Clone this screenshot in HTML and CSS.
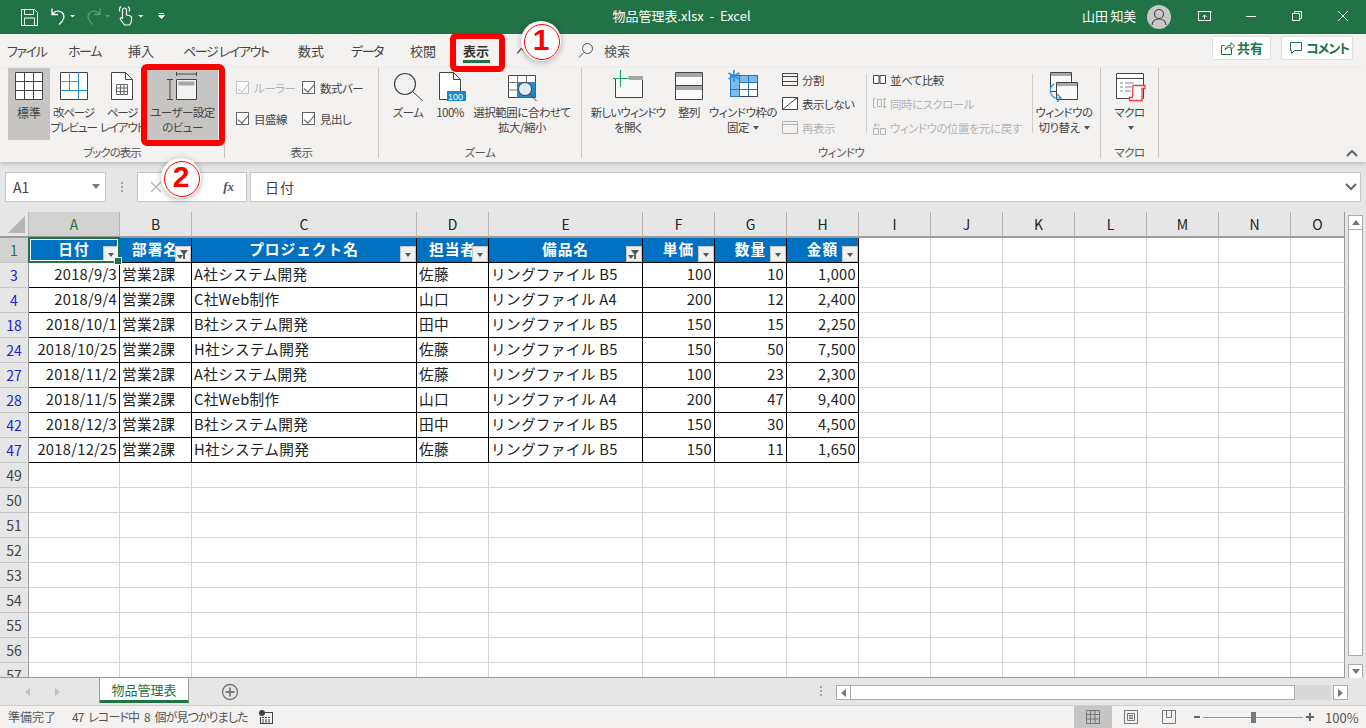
FILE: index.html
```html
<!DOCTYPE html>
<html lang="ja">
<head>
  <meta charset="UTF-8">
  <title>物品管理表.xlsx - Excel</title>
  <link rel="stylesheet" href="styles.css">
</head>
<body>
  <header class="titlebar">
    <div class="qat">
      <svg width="175" height="34" viewBox="0 0 175 34" fill="none" stroke="#fff">
        <path d="M21.500 9.500h13l3 3v13h-16z M24.500 9.500v5h9v-5 M24.500 25.500v-7.500h10v7.500"/>
        <path d="M52 8.500v6h6 M52.500 14c2.500-3 6.500-4 9.500-1.500 3.500 3 2 8-3 12" stroke-width="1.300"/>
        <path d="M70 15h5l-2.500 2.500z" fill="#fff" stroke="none"/>
        <path d="M100 8.500v6h-6 M99.500 14c-2.500-3-6.500-4-9.500-1.500-3.500 3-2 8 3 12" stroke="#5d9a7a" stroke-width="1.300"/>
        <path d="M105 15h5l-2.500 2.500z" fill="#5d9a7a" stroke="none"/>
        <path d="M122.500 16v-6a2 2 0 0 1 4 0v5l3 .5c1.500.3 2 1 2 2.500v2c0 2-1 4-2 5h-5l-4-5.500c-.8-1.200.5-2.500 2-1.500z M120 11.500a4 4 0 0 1 1-5 M129 11.500a4 4 0 0 0-1-5" stroke-width="1.200"/>
        <path d="M138 15h5.500l-2.750 2.500z" fill="#fff" stroke="none"/>
        <path d="M159 13.500h5 M158.500 15.500h6l-3 3z" fill="#fff" stroke-width="1"/>
      </svg>
    </div>
    <div class="doc-title">物品管理表.xlsx&nbsp; - &nbsp;Excel</div>
    <div class="win">
      <span class="user">山田 知美</span>
      <span class="avatar">
        <svg width="24" height="24" viewBox="0 0 24 24" fill="none" stroke="#444" stroke-width="1.200"><circle cx="12" cy="9" r="4.500"/><path d="M5 20c.5-4 3-6 7-6s6.500 2 7 6"/></svg>
      </span>
      <button class="win-btn"><svg width="16" height="16" viewBox="0 0 16 16" fill="none" stroke="#fff"><path d="M1.500 3.500h12v9h-12z M.5 3.500h14 M7.500 11v-4 M5.500 9l2-2 2 2"/></svg></button>
      <button class="win-btn"><svg width="16" height="16" viewBox="0 0 16 16" stroke="#fff"><path d="M3 8.500h10"/></svg></button>
      <button class="win-btn"><svg width="16" height="16" viewBox="0 0 16 16" fill="none" stroke="#fff"><path d="M3.500 5.500h7v7h-7z M5.500 5.500v-2h7v7h-2"/></svg></button>
      <button class="win-btn"><svg width="16" height="16" viewBox="0 0 16 16" fill="none" stroke="#fff"><path d="M3 3l10 10 M13 3L3 13"/></svg></button>
    </div>
  </header>

  <nav class="tabs">
    <span class="tab kana t-file">ファイル</span>
    <span class="tab kana t-home">ホーム</span>
    <span class="tab t-insert">挿入</span>
    <span class="tab kana t-layout">ページ レイアウト</span>
    <span class="tab t-formula">数式</span>
    <span class="tab kana t-data">データ</span>
    <span class="tab t-review">校閲</span>
    <span class="tab tab-active t-view">表示</span>
    <span class="tab kana t-help">ヘルプ</span>
    <span class="search">
      <svg width="16" height="16" viewBox="0 0 16 16" fill="none" stroke="#555"><circle cx="9.500" cy="6.500" r="5"/><path d="M6 10.500l-5 5"/></svg>
      検索
    </span>
    <div class="actions">
      <button class="action a-share">
        <svg width="16" height="16" viewBox="0 0 16 16" fill="none" stroke="#217346"><path d="M12.500 9v5.500h-10v-9h3 M6 10c.5-3 3-5 6-5V2.500l3.500 3.500-3.500 3.500V7c-2.500 0-4.500 1-6 3z"/></svg>
        共有
      </button>
      <button class="action a-comment">
        <svg width="16" height="16" viewBox="0 0 16 16" fill="none" stroke="#217346"><path d="M2.500 2.500h11v8h-7l-3 3v-3h-1z"/></svg>
        コメント
      </button>
    </div>
  </nav>

  <section class="ribbon">
    <div class="group g-book">
      <div class="body">
        <div class="big b-normal on">
          <svg width="32" height="32" viewBox="0 0 32 32" fill="#fff" stroke="#444"><path d="M2.500 2.500h27v27h-27z M11.500 2.500v27 M20.500 2.500v27 M2.500 11.500h27 M2.500 20.500h27"/></svg>
          <span>標準</span>
        </div>
        <div class="big b-break">
          <svg width="32" height="32" viewBox="0 0 32 32" fill="none" stroke="#444"><path d="M2.500 2.500h27v27h-27z" fill="#fff"/><path d="M11.500 2.500v18 M2.500 11.500h18" stroke="#888"/><path d="M20.500 2.500v27 M2.500 20.500h27" stroke="#1e88d0"/></svg>
          <span>改ページ<br>プレビュー</span>
        </div>
        <div class="big b-page">
          <svg width="32" height="32" viewBox="0 0 32 32" fill="none" stroke="#444"><path d="M5.500 2.500h14l7 7v20h-21z M19.500 2.500v7h7" fill="#fff"/><path d="M10.500 14.500h11v10h-11z M10.500 18h11 M10.500 21.500h11 M14.500 14.500v10 M18 14.500v10" stroke="#666"/></svg>
          <span>ページ<br>レイアウト</span>
        </div>
        <div class="big b-custom on">
          <svg width="32" height="32" viewBox="0 0 32 32" fill="none" stroke="#444"><path d="M9.500 2v4 M9.500 4h20 M29.500 2v4" /><path d="M9.500 9.500h20v20h-20z" fill="#f3f2f1"/><path d="M11.500 11.500h16v4h-16z" fill="#a6a6a6" stroke="none"/><path d="M0 9.500h6 M3 9.500v20 M0 29.500h6"/></svg>
          <span>ユーザー設定<br>のビュー</span>
        </div>
      </div>
      <div class="label">ブックの表示</div>
    </div>

    <div class="group g-show">
      <div class="body checks">
        <label class="chk off"><i class="box"></i>ルーラー</label>
        <label class="chk"><i class="box"></i>数式バー</label>
        <label class="chk"><i class="box"></i>目盛線</label>
        <label class="chk"><i class="box"></i>見出し</label>
      </div>
      <div class="label">表示</div>
    </div>

    <div class="group g-zoom">
      <div class="body">
        <div class="big b-zoom">
          <svg width="32" height="32" viewBox="0 0 32 32" fill="none" stroke="#444"><circle cx="13" cy="14" r="10.500" stroke-width="1.200"/><path d="M21 22l10 9"/></svg>
          <span>ズーム</span>
        </div>
        <div class="big b-100">
          <svg width="32" height="32" viewBox="0 0 32 32" fill="none" stroke="#444"><path d="M5.500 2.500h14l7 7v20h-21z M19.500 2.500v7h7" fill="#fff"/><path d="M13 21h19v10H13z" fill="#1e88d0" stroke="none"/><text x="14" y="30" class="badge-text">100</text></svg>
          <span>100%</span>
        </div>
        <div class="big b-fit">
          <svg width="32" height="32" viewBox="0 0 32 32" fill="none" stroke="#444"><path d="M2.500 5.500h27v22h-27z" fill="#fff"/><path d="M11.500 5.500v22 M20.500 5.500v22 M2.500 12.500h27 M2.500 20h27" stroke="#777"/><path d="M11.500 12.500h18v15h-18z" fill="#1e88d0" stroke="none"/><circle cx="19" cy="19" r="6.500" fill="#dcecf8"/><path d="M23.500 24l7 7"/></svg>
          <span>選択範囲に合わせて<br>拡大/縮小</span>
        </div>
      </div>
      <div class="label">ズーム</div>
    </div>

    <div class="group g-window">
      <div class="body">
        <div class="big b-new">
          <svg width="32" height="32" viewBox="0 0 32 32" fill="none" stroke="#444"><path d="M3.500 8v19.500h27v-21h-14" fill="#fafafa"/><path d="M17 6h14v4H17z" fill="#a6a6a6" stroke="none"/><path d="M8.500 0v17 M1 8.500h16" stroke="#21a366" stroke-width="1.200"/></svg>
          <span>新しいウィンドウ<br>を開く</span>
        </div>
        <div class="big b-arrange">
          <svg width="32" height="32" viewBox="0 0 32 32" fill="#fafafa" stroke="#444"><path d="M2.500 2.500h27v27h-27z"/><path d="M2.500 15.500h27"/><path d="M3 3h26v4H3z M3 16h26v4H3z" fill="#a6a6a6" stroke="none"/></svg>
          <span>整列</span>
        </div>
        <div class="big b-freeze">
          <svg width="32" height="32" viewBox="0 0 32 32" fill="none" stroke="#444"><path d="M3.500 5.500h27v21h-27z" fill="#fff"/><path d="M3.500 5.500h27v7h-18v14h-9z" fill="#7fbbe6" stroke="#1e78bd"/><path d="M12.500 12.500h18M3.500 19.500h27M21.500 5.500v21M12.500 5.500v21" stroke="#1e78bd"/><path d="M7 0v12M1.500 3l11 6M12.500 3l-11 6" stroke="#2a8fdc" stroke-width="1.600"/></svg>
          <span>ウィンドウ枠の<br>固定 <b class="caret"></b></span>
        </div>
        <div class="smalls s-first">
          <div class="small">
            <svg width="17" height="14" viewBox="0 0 17 14" fill="none" stroke="#444"><path d="M.5.500h15v12H.5z M.5 3.500h15 M.5 8.500h15"/></svg>
            分割
          </div>
          <div class="small">
            <svg width="17" height="14" viewBox="0 0 17 14" fill="#fff" stroke="#444"><path d="M.5.500h15v12H.5z M.5 12.500L15.500.5"/></svg>
            表示しない
          </div>
          <div class="small off">
            <svg width="17" height="14" viewBox="0 0 17 14" fill="none" stroke="#b3b3b3"><path d="M.5.500h15v12H.5z M.5 3.500h15"/></svg>
            再表示
          </div>
        </div>
        <i class="vsep"></i>
        <div class="smalls s-second">
          <div class="small">
            <svg width="14" height="14" viewBox="0 0 14 14" fill="#fff" stroke="#444"><path d="M.5 2.500h5.500v8H.5z M7 2.500h5.500v8H7z M6 3.500h1"/></svg>
            並べて比較
          </div>
          <div class="small off">
            <svg width="14" height="14" viewBox="0 0 14 14" fill="none" stroke="#b3b3b3"><path d="M2.500 1.500h-2v9h2 M4.500 2.500h4v7h-4z M11.500 1v10 M10 3l1.500-2 1.500 2 M10 9l1.500 2 1.500-2"/></svg>
            同時にスクロール
          </div>
          <div class="small off">
            <svg width="14" height="14" viewBox="0 0 14 14" fill="none" stroke="#b3b3b3"><path d="M.5 7.500h5v6h-5z M7.500 7.500h5v6h-5z M1 4h6 M3 2L1 4l2 2"/></svg>
            ウィンドウの位置を元に戻す
          </div>
        </div>
        <i class="vsep"></i>
        <div class="big b-switch">
          <svg width="32" height="32" viewBox="0 0 32 32" fill="none" stroke="#444"><path d="M2.500 2.500h21v19h-21z" fill="#fafafa"/><path d="M3 3h20v3H3z" fill="#a6a6a6" stroke="none"/><path d="M8.500 12.500h21v17h-21z" fill="#fafafa"/><path d="M9 13h20v3H9z" fill="#a6a6a6" stroke="none"/><path d="M6 14c-5 3-5 11 1 14h5 M9 24l4 4-4 4" stroke="#2a8fdc" stroke-width="1.200"/></svg>
          <span>ウィンドウの<br>切り替え <b class="caret"></b></span>
        </div>
      </div>
      <div class="label">ウィンドウ</div>
    </div>

    <div class="group g-macro">
      <div class="body">
        <div class="big b-macro">
          <svg width="32" height="32" viewBox="0 0 32 32" fill="none" stroke="#444"><path d="M2.500 3.500h27v25h-27z" fill="#fff"/><path d="M2.500 8.500h27" /><path d="M6 13h3M11 13h9M6 17h3M11 17h7M6 21h3M11 21h6" stroke="#888"/><path d="M19 15.500h12v3h-3v12H15.500v-3h3z M28 15.500h-6" fill="#fff" stroke="#f03c3c" stroke-width="1.300"/></svg>
          <span>マクロ<br><b class="caret"></b></span>
        </div>
      </div>
      <div class="label">マクロ</div>
    </div>

    <svg class="collapse" width="12" height="8" viewBox="0 0 12 8" fill="none" stroke="#666" stroke-width="2"><path d="M1 7l5-5 5 5"/></svg>
  </section>

  <section class="formula">
    <div class="namebox">A1<b class="caret"></b></div>
    <span class="grip"></span>
    <div class="fx-box">
      <svg width="12" height="12" viewBox="0 0 12 12" stroke="#bdbdbd" stroke-width="1.500"><path d="M1 1l10 10M11 1L1 11"/></svg>
      <i class="fx">fx</i>
    </div>
    <div class="input">
      <span>日付</span>
      <svg width="12" height="8" viewBox="0 0 12 8" fill="none" stroke="#666" stroke-width="2"><path d="M1 1l5 5 5-5"/></svg>
    </div>
  </section>

  <section class="sheet">
    <div class="grid">
      <table>
        <thead>
          <tr>
            <th class="corner"></th>
            <th class="col-a sel">A</th><th class="col-b">B</th><th class="col-c">C</th><th class="col-d">D</th><th class="col-e">E</th><th class="col-f">F</th><th class="col-g">G</th><th class="col-h">H</th><th class="col-i">I</th><th class="col-i">J</th><th class="col-i">K</th><th class="col-i">L</th><th class="col-i">M</th><th class="col-i">N</th><th class="col-o">O</th>
          </tr>
        </thead>
        <tbody>
          <tr class="head">
            <th class="rh sel">1</th>
            <td class="hd active">日付<i class="flt"></i></td>
            <td class="hd">部署名<i class="flt funnel"></i></td>
            <td class="hd">プロジェクト名<i class="flt"></i></td>
            <td class="hd">担当者<i class="flt"></i></td>
            <td class="hd">備品名<i class="flt funnel"></i></td>
            <td class="hd">単価<i class="flt"></i></td>
            <td class="hd">数量<i class="flt"></i></td>
            <td class="hd">金額<i class="flt"></i></td>
            <td></td><td></td><td></td><td></td><td></td><td></td><td></td>
          </tr>
          <tr class="data"><th class="rh hit">3</th><td class="num">2018/9/3</td><td>営業2課</td><td>A社システム開発</td><td>佐藤</td><td>リングファイル B5</td><td class="num">100</td><td class="num">10</td><td class="num">1,000</td><td></td><td></td><td></td><td></td><td></td><td></td><td></td></tr>
          <tr class="data"><th class="rh hit">4</th><td class="num">2018/9/4</td><td>営業2課</td><td>C社Web制作</td><td>山口</td><td>リングファイル A4</td><td class="num">200</td><td class="num">12</td><td class="num">2,400</td><td></td><td></td><td></td><td></td><td></td><td></td><td></td></tr>
          <tr class="data"><th class="rh hit">18</th><td class="num">2018/10/1</td><td>営業2課</td><td>B社システム開発</td><td>田中</td><td>リングファイル B5</td><td class="num">150</td><td class="num">15</td><td class="num">2,250</td><td></td><td></td><td></td><td></td><td></td><td></td><td></td></tr>
          <tr class="data"><th class="rh hit">24</th><td class="num">2018/10/25</td><td>営業2課</td><td>H社システム開発</td><td>佐藤</td><td>リングファイル B5</td><td class="num">150</td><td class="num">50</td><td class="num">7,500</td><td></td><td></td><td></td><td></td><td></td><td></td><td></td></tr>
          <tr class="data"><th class="rh hit">27</th><td class="num">2018/11/2</td><td>営業2課</td><td>A社システム開発</td><td>佐藤</td><td>リングファイル B5</td><td class="num">100</td><td class="num">23</td><td class="num">2,300</td><td></td><td></td><td></td><td></td><td></td><td></td><td></td></tr>
          <tr class="data"><th class="rh hit">28</th><td class="num">2018/11/5</td><td>営業2課</td><td>C社Web制作</td><td>山口</td><td>リングファイル A4</td><td class="num">200</td><td class="num">47</td><td class="num">9,400</td><td></td><td></td><td></td><td></td><td></td><td></td><td></td></tr>
          <tr class="data"><th class="rh hit">42</th><td class="num">2018/12/3</td><td>営業2課</td><td>B社システム開発</td><td>田中</td><td>リングファイル B5</td><td class="num">150</td><td class="num">30</td><td class="num">4,500</td><td></td><td></td><td></td><td></td><td></td><td></td><td></td></tr>
          <tr class="data"><th class="rh hit">47</th><td class="num">2018/12/25</td><td>営業2課</td><td>H社システム開発</td><td>佐藤</td><td>リングファイル B5</td><td class="num">150</td><td class="num">11</td><td class="num">1,650</td><td></td><td></td><td></td><td></td><td></td><td></td><td></td></tr>
          <tr><th class="rh">49</th><td></td><td></td><td></td><td></td><td></td><td></td><td></td><td></td><td></td><td></td><td></td><td></td><td></td><td></td><td></td></tr>
          <tr><th class="rh">50</th><td></td><td></td><td></td><td></td><td></td><td></td><td></td><td></td><td></td><td></td><td></td><td></td><td></td><td></td><td></td></tr>
          <tr><th class="rh">51</th><td></td><td></td><td></td><td></td><td></td><td></td><td></td><td></td><td></td><td></td><td></td><td></td><td></td><td></td><td></td></tr>
          <tr><th class="rh">52</th><td></td><td></td><td></td><td></td><td></td><td></td><td></td><td></td><td></td><td></td><td></td><td></td><td></td><td></td><td></td></tr>
          <tr><th class="rh">53</th><td></td><td></td><td></td><td></td><td></td><td></td><td></td><td></td><td></td><td></td><td></td><td></td><td></td><td></td><td></td></tr>
          <tr><th class="rh">54</th><td></td><td></td><td></td><td></td><td></td><td></td><td></td><td></td><td></td><td></td><td></td><td></td><td></td><td></td><td></td></tr>
          <tr><th class="rh">55</th><td></td><td></td><td></td><td></td><td></td><td></td><td></td><td></td><td></td><td></td><td></td><td></td><td></td><td></td><td></td></tr>
          <tr><th class="rh">56</th><td></td><td></td><td></td><td></td><td></td><td></td><td></td><td></td><td></td><td></td><td></td><td></td><td></td><td></td><td></td></tr>
          <tr><th class="rh">57</th><td></td><td></td><td></td><td></td><td></td><td></td><td></td><td></td><td></td><td></td><td></td><td></td><td></td><td></td><td></td></tr>
        </tbody>
      </table>
    </div>
    <div class="vscroll">
      <span class="sb-btn"><i class="tri-up"></i></span>
      <span class="sb-thumb"></span>
      <span class="sb-btn"><i class="tri-down"></i></span>
    </div>
  </section>

  <section class="sheettabs">
    <div class="nav-arrows"><i class="arr-l"></i><i class="arr-r"></i></div>
    <div class="sheet-tab">物品管理表</div>
    <svg class="add" width="18" height="18" viewBox="0 0 18 18" fill="none" stroke="#777" stroke-width="1.300"><circle cx="9" cy="9" r="7.500"/><path d="M9 4.500v9M4.500 9h9" stroke-width="1.800"/></svg>
    <span class="grip tabs-grip"></span>
    <div class="hscroll">
      <span class="sb-btn"><i class="tri-left"></i></span>
      <span class="h-thumb"></span>
      <span class="h-track"></span>
      <span class="sb-btn"><i class="tri-right"></i></span>
    </div>
  </section>

  <footer class="status">
    <span class="ready">準備完了</span>
    <span class="count">47 レコード中 8 個が見つかりました</span>
    <svg class="macro-rec" width="14" height="14" viewBox="0 0 14 14" fill="#444"><circle cx="3" cy="3" r="3"/><path d="M6 2h8v12H1V7h1v6h11V3H6z"/><path d="M3 7h2v1H3zM6 7h2v1H6zM9 7h2v1H9zM3 9.500h2v1H3zM6 9.500h2v1H6zM9 9.500h2v1H9zM3 11.500h2v1H3zM6 11.500h2v1H6zM9 11.500h2v1H9z"/></svg>
    <div class="views">
      <span class="view on"><svg width="14" height="14" viewBox="0 0 14 14" fill="none" stroke="#777"><path d="M.5.500h13v13H.5z M.5 4.500h13 M.5 9h13 M4.500.5v13 M9 .5v13"/></svg></span>
      <span class="view"><svg width="14" height="14" viewBox="0 0 14 14" fill="none" stroke="#777"><path d="M.5.500h13v13H.5z M3.500 3.500h7v7h-7z M5 5.500h4 M5 7h4 M5 8.500h4"/></svg></span>
      <span class="view"><svg width="14" height="14" viewBox="0 0 14 14" fill="none" stroke="#777"><path d="M.5.500h13v13H.5z M4.500.5v7h5v-7"/></svg></span>
    </div>
    <div class="zoomer">
      <i class="zm-minus"></i>
      <span class="zm-track"><i class="zm-thumb"></i></span>
      <i class="zm-plus"></i>
    </div>
    <span class="zoom-val">100%</span>
  </footer>

  <div class="mark mark-one">1</div>
  <div class="mark mark-two">2</div>
</body>
</html>
```

FILE: styles.css
```css
* { box-sizing: border-box; }
html, body { margin: 0; height: 100%; }
body {
  position: relative;
  width: 1366px;
  height: 728px;
  overflow: hidden;
  display: flex;
  flex-direction: column;
  font-family: "Noto Sans CJK JP", "Noto Sans", sans-serif;
  font-size: 12px;
  color: #444;
  background: #f3f2f1;
  font-feature-settings: "palt";
}
button { font: inherit; padding: 0; }
svg { display: block; }

/* title bar */
.titlebar {
  height: 34px;
  flex: none;
  display: flex;
  align-items: center;
  background: #217346;
  color: #fff;
}
.qat, .win { flex: 1 1 0; display: flex; align-items: center; }
.win { justify-content: flex-end; }
.doc-title { font-size: 13px; white-space: nowrap; padding: 0 3px 4px 0; }
.user { font-size: 13px; margin-right: 11px; padding-bottom: 3px; letter-spacing: -0.2px; }
.avatar {
  width: 24px;
  height: 24px;
  border-radius: 50%;
  background: #c8c8c8;
  margin-right: 11px;
}
.win-btn {
  width: 46px;
  height: 34px;
  border: 0;
  background: none;
  padding-bottom: 2px;
  display: flex;
  align-items: center;
  justify-content: center;
}

/* tabs */
.tabs {
  height: 34px;
  flex: none;
  display: flex;
  align-items: center;
  padding: 0 13px 2px 7px;
  position: relative;
  z-index: 2;
}
.tab { position: relative; white-space: nowrap; font-size: 13px; flex: none; }
.kana { letter-spacing: -1.4px; }
.t-file { width: 61px; }
.t-home { width: 60px; }
.t-insert { width: 55px; }
.t-layout { width: 115px; }
.t-formula { width: 53px; }
.t-data { width: 59px; }
.t-review { width: 53px; }
.t-view { width: 53px; }
.t-help { width: 62px; }
.tab-active { font-weight: 700; color: #333; }
.tab-active::before {
  content: "";
  position: absolute;
  left: 0;
  width: 27px;
  bottom: -3px;
  height: 3px;
  background: #217346;
}
.tab-active::after {
  content: "";
  position: absolute;
  left: -13px;
  right: 11px;
  top: -8px;
  bottom: -12px;
  border: 6px solid #f00;
  border-radius: 6px;
}
.search { display: flex; align-items: center; gap: 10px; font-size: 13px; color: #555; }
.actions { margin-left: auto; display: flex; gap: 10px; margin-top: -5px; }
.action {
  height: 24px;
  padding: 0 0 0 6px;
  display: flex;
  align-items: center;
  gap: 2px;
  background: #fff;
  border: 1px solid #e1dfdd;
  border-radius: 2px;
  color: #217346;
  font-weight: 700;
  font-size: 13px;
}
.a-share { width: 59px; }
.a-comment { width: 72px; letter-spacing: -1px; }

/* ribbon */
.ribbon {
  height: 94px;
  flex: none;
  display: flex;
  position: relative;
  z-index: 1;
  box-shadow: 0 2px 4px rgba(0, 0, 0, 0.18);
  background: #f3f2f1;
  font-size: 11.5px;
  letter-spacing: -0.5px;
}
.group {
  height: 90px;
  display: flex;
  flex-direction: column;
  border-right: 1px solid #c8c6c4;
  flex: none;
}
.body { height: 76px; display: flex; align-items: flex-start; }
.label { height: 14px; line-height: 16px; text-align: center; color: #555; }
.g-book { width: 225px; padding-left: 8px; }
.g-book .label { margin-left: -8px; letter-spacing: -1px; }
.g-show { width: 154px; }
.g-zoom { width: 203px; padding-left: 5px; }
.g-zoom .label { margin-left: -5px; }
.g-window { width: 519px; padding-left: 4px; }
.g-window .label { margin-left: -4px; }
.g-macro { width: 58px; }
.big {
  flex: none;
  height: 72px;
  padding-top: 2px;
  display: flex;
  flex-direction: column;
  align-items: center;
  text-align: center;
  line-height: 15px;
  white-space: nowrap;
  position: relative;
}
.big span { margin-top: 3px; }
.big.on { background: #c6c5c3; }
.b-normal { width: 42px; letter-spacing: 0; font-size: 12px; }
.b-break { width: 47px; letter-spacing: -1.2px; }
.b-page { width: 50px; letter-spacing: -1.2px; }
.b-custom { width: 71px; }
.b-custom::after {
  content: "";
  position: absolute;
  left: -6px;
  right: -7px;
  top: -4px;
  bottom: -6px;
  border: 6px solid #f00;
  border-radius: 6px;
}
.b-zoom { width: 48px; }
.b-100 { width: 36px; }
.b-fit { width: 108px; }
.b-new { width: 84px; letter-spacing: -0.8px; }
.b-arrange { width: 38px; }
.b-freeze { width: 70px; }
.b-switch { width: 62px; }
.b-macro { width: 57px; }
.badge-text { font: 9px "Liberation Sans", sans-serif; fill: #fff; stroke: none; letter-spacing: 0; }
.caret {
  display: inline-block;
  vertical-align: middle;
  margin: 0 0 2px 2px;
  border: 3px solid transparent;
  border-top: 4px solid #555;
  border-bottom: 0;
}
.checks {
  display: grid;
  grid-template-columns: 66px 76px;
  grid-auto-rows: 31px;
  padding: 4px 0 0 11px;
  align-content: start;
  align-items: center;
}
.chk { display: flex; align-items: center; gap: 5px; white-space: nowrap; }
.box {
  width: 13px;
  height: 13px;
  background: #fff;
  border: 1px solid #666;
  position: relative;
}
.box::after {
  content: "";
  position: absolute;
  left: 3px;
  top: 0;
  width: 5px;
  height: 9px;
  border: solid #555;
  border-width: 0 1.5px 1.5px 0;
  transform: rotate(40deg);
}
.chk.off { color: #b3b3b3; }
.chk.off .box { border-color: #c4c4c4; }
.chk.off .box::after { border-color: #c4c4c4; }
.smalls { flex: none; display: flex; flex-direction: column; }
.s-first { width: 88px; padding-left: 4px; }
.s-second { width: 165px; padding-left: 6px; }
.small { height: 24px; display: flex; align-items: center; gap: 3px; white-space: nowrap; }
.small.off { color: #b3b3b3; }
.vsep { width: 1px; height: 59px; margin-top: 6px; background: #d2d0ce; flex: none; }
.collapse { position: absolute; right: 8px; top: 81px; }

/* formula bar */
.formula {
  height: 50px;
  flex: none;
  display: flex;
  align-items: flex-start;
  padding: 10px 5px 0;
  background: #e6e6e6;
}
.namebox {
  width: 101px;
  height: 30px;
  display: flex;
  align-items: center;
  justify-content: space-between;
  padding: 0 5px 0 7px;
  background: #fff;
  border: 1px solid #c6c6c6;
  font-size: 14px;
}
.namebox .caret { border-width: 4px; border-top-width: 5px; border-top-color: #777; border-bottom: 0; }
.grip {
  width: 2px;
  height: 11px;
  margin: 10px 14px 0 15px;
  background: repeating-linear-gradient(#a6a6a6 0 2px, transparent 2px 4px);
}
.fx-box {
  width: 110px;
  height: 30px;
  display: flex;
  align-items: center;
  justify-content: space-between;
  padding: 0 12px 0 12px;
  background: #fff;
  border: 1px solid #c6c6c6;
  margin-right: 3px;
}
.fx { font: italic 700 13px "Liberation Serif", serif; color: #555; }
.input {
  flex: 1;
  height: 30px;
  display: flex;
  align-items: center;
  justify-content: space-between;
  padding: 0 3px 0 14px;
  background: #fff;
  border: 1px solid #c6c6c6;
  font-size: 14px;
  letter-spacing: 1px;
}

/* sheet */
.sheet { height: 466px; flex: none; display: flex; background: #e6e6e6; }
.grid {
  width: 1345px;
  height: 466px;
  overflow: hidden;
  background: #fff;
  border-bottom: 1px solid #9b9b9b;
}
table {
  width: 1345px;
  table-layout: fixed;
  border-collapse: separate;
  border-spacing: 0;
  font-size: 14.67px;
  font-feature-settings: normal;
  color: #222;
}
thead th {
  height: 26px;
  padding: 0;
  background: #e6e6e6;
  border-right: 1px solid #b5b5b5;
  border-bottom: 2px solid #9b9b9b;
  font-weight: 400;
  font-size: 14px;
}
.corner { width: 29px; position: relative; }
.corner::after {
  content: "";
  position: absolute;
  right: 3px;
  bottom: 3px;
  border-left: 17px solid transparent;
  border-bottom: 17px solid #b4b4b4;
}
.col-a { width: 91px; }
.col-b { width: 72px; }
.col-c { width: 225px; }
.col-d { width: 72px; }
.col-e { width: 154px; }
.col-f, .col-g, .col-h, .col-i { width: 72px; }
.col-o { width: 54px; border-right-color: #9b9b9b !important; }
thead th.sel { background: #d2d2d2; color: #217346; }
tbody td { height: 25px; padding: 0 2px 3px; }
.rh { height: 25px; padding: 0 2px 1px; }
tbody td {
  border-right: 1px solid #d4d4d4;
  border-bottom: 1px solid #d4d4d4;
  white-space: nowrap;
  overflow: hidden;
}
tbody td:last-child { border-right-color: #9b9b9b; }
.rh {
  background: #e6e6e6;
  border-right: 1px solid #9b9b9b;
  border-bottom: 1px solid #c8c8c8;
  font-weight: 400;
  font-size: 14px;
  color: #444;
}
.rh.hit { color: #2020e0; }
.rh.sel { background: #d2d2d2; color: #217346; }
.data td { letter-spacing: 0.3px; }
.data td:nth-child(-n+9) { border-color: #000; }
.num { text-align: right; }
.hd {
  position: relative;
  background: #0070c0;
  color: #fff;
  font-weight: 700;
  text-align: center;
  letter-spacing: 1px;
  border-color: #000 !important;
  overflow: visible !important;
}
.active::after {
  content: "";
  position: absolute;
  left: -1px;
  top: -1px;
  right: -1px;
  bottom: -1px;
  border: 2px solid #217346;
  box-shadow: inset 0 0 0 1px #fff;
  z-index: 2;
}
.active::before {
  content: "";
  position: absolute;
  right: -3px;
  bottom: -3px;
  width: 6px;
  height: 6px;
  background: #217346;
  border: 1px solid #fff;
  z-index: 3;
}
.flt {
  position: absolute;
  right: 0;
  bottom: 0;
  width: 16px;
  height: 16px;
  background: #f0f0f0;
  border: 1px solid #c8c8c8;
  z-index: 1;
}
.flt::after {
  content: "";
  position: absolute;
  left: 4px;
  top: 6px;
  border: 3px solid transparent;
  border-top: 4px solid #555;
  border-bottom: 0;
}
.funnel::after { left: 1px; top: 8px; }
.funnel::before {
  content: "";
  position: absolute;
  right: 2px;
  top: 3px;
  width: 8px;
  height: 9px;
  background: #555;
  clip-path: polygon(0 0, 100% 0, 62% 45%, 62% 100%, 38% 100%, 38% 45%);
}

/* scrollbars */
.vscroll {
  width: 21px;
  display: flex;
  flex-direction: column;
  padding: 3px 3px 0 3px;
}
.sb-btn {
  flex: none;
  width: 15px;
  height: 15px;
  background: #fff;
  border: 1px solid #ababab;
  display: flex;
  align-items: center;
  justify-content: center;
}
.sb-thumb {
  flex: none;
  height: 426px;
  margin-bottom: 8px;
  background: #fff;
  border: 1px solid #ababab;
  border-top: 0;
}
.tri-up, .tri-down, .tri-left, .tri-right { display: block; border: 4px solid transparent; }
.tri-up { border-top: 0; border-bottom: 5px solid #777; }
.tri-down { border-bottom: 0; border-top: 5px solid #777; }
.tri-left { border-left: 0; border-right: 5px solid #777; }
.tri-right { border-right: 0; border-left: 5px solid #777; }

/* sheet tabs */
.sheettabs {
  height: 28px;
  flex: none;
  display: flex;
  align-items: flex-start;
  background: #e6e6e6;
  border-bottom: 1px solid #cfcfcf;
}
.nav-arrows {
  width: 100px;
  padding: 10px 0 0 25px;
  display: flex;
  gap: 25px;
  border-right: 1px solid #9b9b9b;
  height: 25px;
}
.arr-l, .arr-r { display: block; height: 0; border: 4px solid transparent; }
.arr-l { border-left: 0; border-right: 5px solid #c0c0c0; }
.arr-r { border-right: 0; border-left: 5px solid #c0c0c0; }
.sheet-tab {
  width: 89px;
  height: 25px;
  text-align: center;
  line-height: 24px;
  font-size: 13px;
  color: #217346;
  background: #fff;
  border-bottom: 3px solid #217346;
  border-right: 1px solid #9b9b9b;
}
.add { margin: 5px 0 0 32px; }
.tabs-grip { margin: 8px 0 0 581px; }
.hscroll { display: flex; margin: 7px 0 0 14px; }
.h-thumb {
  width: 444px;
  height: 15px;
  background: #fff;
  border: 1px solid #ababab;
  border-left: 0;
}
.h-track { width: 36px; height: 15px; margin-right: 2px; background: #d9d9d9; }

/* status bar */
.status {
  height: 22px;
  flex: none;
  display: flex;
  align-items: center;
  padding-left: 8px;
  color: #555;
}
.ready { width: 64px; padding-bottom: 1px; }
.count { width: 187px; padding-bottom: 1px; letter-spacing: -0.9px; word-spacing: 3px; }
.macro-rec { margin-right: auto; }
.views { display: flex; height: 22px; }
.view {
  width: 38px;
  display: flex;
  align-items: center;
  justify-content: center;
}
.view.on { background: #c6c5c3; }
.zoomer { display: flex; align-items: center; margin-left: 6px; }
.zm-minus { width: 6px; height: 2px; background: #666; }
.zm-track { width: 100px; height: 1px; margin: 0 3px; background: #999; position: relative; }
.zm-thumb {
  position: absolute;
  left: 48px;
  top: -5px;
  width: 5px;
  height: 11px;
  background: #777;
}
.zm-plus {
  width: 8px;
  height: 8px;
  background:
    linear-gradient(#666, #666) center / 8px 2px no-repeat,
    linear-gradient(#666, #666) center / 2px 8px no-repeat;
}
.zoom-val { margin-left: 11px; width: 41px; font-size: 13px; color: #555; font-feature-settings: normal; }

/* numbered markers over the screen */
.mark {
  position: absolute;
  width: 40px;
  height: 40px;
  border-radius: 50%;
  background: #fff;
  box-shadow: 0 1px 6px rgba(0, 0, 0, 0.3);
  font: 700 30px/38px "Liberation Sans", sans-serif;
  color: #f00;
  text-align: center;
  z-index: 5;
}
.mark::after {
  content: "";
  position: absolute;
  left: 3px;
  top: 3px;
  width: 34px;
  height: 34px;
  border: 1.5px solid #f00;
  border-radius: 50%;
}
.mark-one { left: 521px; top: 21px; }
.mark-two { left: 161px; top: 158px; }
```
